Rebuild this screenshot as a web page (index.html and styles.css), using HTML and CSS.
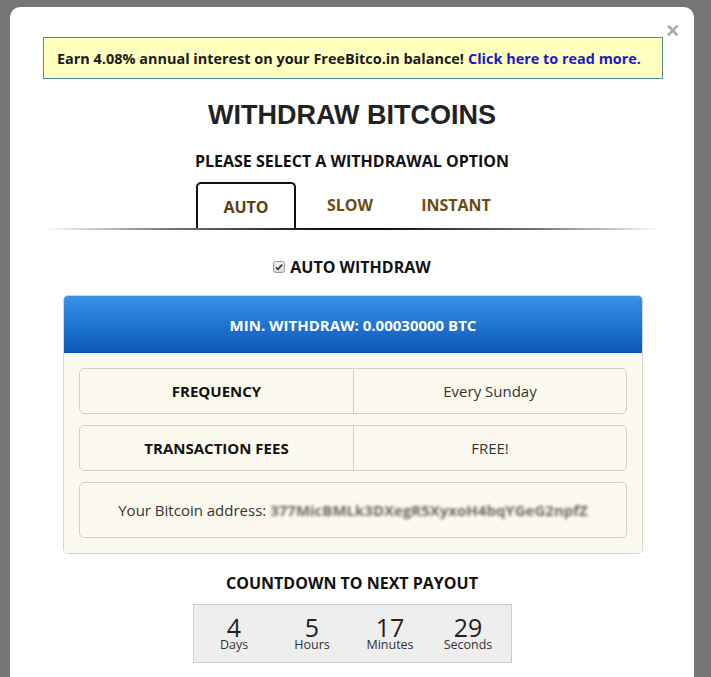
FILE: index.html
```html
<!DOCTYPE html>
<html>
<head>
<meta charset="utf-8">
<link rel="stylesheet" href="styles.css">
</head>
<body>
<div class="modal">
  <span class="close">&#215;</span>
  <div class="banner">Earn 4.08% annual interest on your FreeBitco.in balance! <a href="#">Click here to read more.</a></div>
  <h1 class="title">WITHDRAW BITCOINS</h1>
  <h2 class="subtitle">PLEASE SELECT A WITHDRAWAL OPTION</h2>
  <div class="tabs">
    <div class="tab active">AUTO</div>
    <div class="tab">SLOW</div>
    <div class="tab">INSTANT</div>
  </div>
  <div class="tabline"></div>
  <label class="check"><svg class="box" width="12" height="12" viewBox="0 0 12 12"><defs><linearGradient id="cg" x1="0" y1="0" x2="0" y2="1"><stop offset="0" stop-color="#f4f4f4"/><stop offset="1" stop-color="#d8d8d8"/></linearGradient></defs><rect x="0.5" y="0.5" width="11" height="11" rx="2" fill="url(#cg)" stroke="#9a9a9a"/><path d="M3 6.2 L5 8.3 L9.2 3.6" fill="none" stroke="#333" stroke-width="1.6"/></svg>AUTO WITHDRAW</label>
  <div class="panel">
    <div class="panel-head">MIN. WITHDRAW: 0.00030000 BTC</div>
    <div class="panel-body">
      <div class="row"><div class="cell key">FREQUENCY</div><div class="cell val">Every Sunday</div></div>
      <div class="row"><div class="cell key">TRANSACTION FEES</div><div class="cell val">FREE!</div></div>
      <div class="row addr">Your Bitcoin address:&nbsp;<span class="blur">377MicBMLk3DXegR5XyxoH4bqYGeG2npfZ</span></div>
    </div>
  </div>
  <h3 class="cd-title">COUNTDOWN TO NEXT PAYOUT</h3>
  <div class="countdown">
    <div class="unit"><span class="num">4</span><span class="lbl">Days</span></div>
    <div class="unit"><span class="num">5</span><span class="lbl">Hours</span></div>
    <div class="unit"><span class="num">17</span><span class="lbl">Minutes</span></div>
    <div class="unit"><span class="num">29</span><span class="lbl">Seconds</span></div>
  </div>
</div>
</body>
</html>
```
FILE: styles.css
```css
html, body { margin: 0; padding: 0; }
body {
  background: #767676;
  font-family: "Open Sans", "DejaVu Sans", sans-serif;
  height: 677px;
  overflow: hidden;
}
.modal {
  position: relative;
  margin: 7px 0 0 10px;
  width: 684px;
  height: 700px;
  background: #fff;
  border-radius: 10px;
  padding-top: 30px;
  box-sizing: border-box;
}
.close {
  position: absolute;
  right: 15px;
  top: 13px;
  font-family: "Liberation Sans", Arial, sans-serif;
  font-weight: bold;
  font-size: 22px;
  color: #a8a8a8;
  line-height: 1;
}
.banner {
  width: 620px;
  height: 42px;
  box-sizing: border-box;
  margin: 0 0 0 33px;
  background: #ffffc0;
  border: 1px solid #4f8f8f;
  font-weight: bold;
  font-size: 14.45px;
  color: #1a1a1a;
  display: flex;
  align-items: center;
  padding-left: 13px;
  white-space: nowrap;
}
.banner a { color: #1a1acc; text-decoration: none; margin-left: 4px; }
.title {
  margin: 20px 0 0;
  text-align: center;
  font-family: "Liberation Sans", Arial, sans-serif;
  font-size: 27px;
  font-weight: bold;
  color: #222;
  line-height: 32px;
}
.subtitle {
  margin: 19px 0 0;
  text-align: center;
  font-size: 16px;
  font-weight: bold;
  color: #111;
  line-height: 22px;
}
.tabs {
  display: flex;
  margin: 10px 0 0 186px;
  height: 46px;
}
.tab {
  font-size: 16px;
  font-weight: bold;
  color: #6e4a12;
  padding: 11px 0 0;
  text-align: center;
  line-height: 24px;
}
.tab:nth-child(2) { width: 108px; }
.tab:nth-child(3) { width: 104px; }
.tab.active {
  width: 96px;
  border: 2px solid #111;
  border-bottom: none;
  border-radius: 5px 5px 0 0;
  padding-top: 11px;
  color: #5e3e0c;
}
.tabline {
  margin: 0 0 0 35px;
  width: 618px;
  height: 2px;
  background: linear-gradient(to right, rgba(0,0,0,0), #777 20%, #111 45%, #111 55%, #777 80%, rgba(0,0,0,0));
}
.check {
  display: flex;
  align-items: center;
  justify-content: center;
  margin: 27px 0 0;
  font-size: 16px;
  font-weight: bold;
  color: #111;
  line-height: 20px;
}
.check .box { margin: 0 5px 0 0; }
.panel {
  width: 580px;
  margin: 18px 0 0 53px;
  border: 1px solid #d8d6c8;
  border-radius: 5px;
  overflow: hidden;
  box-sizing: border-box;
}
.panel-head {
  height: 57px;
  background: linear-gradient(#3a90ea, #0a58b8);
  color: #fff;
  font-weight: bold;
  font-size: 15px;
  display: flex;
  align-items: center;
  justify-content: center;
}
.panel-body {
  background: #fcfaee;
  padding: 15px 15px 15px;
  display: flex;
  flex-direction: column;
  gap: 11px;
}
.row {
  display: flex;
  height: 46px;
  border: 1px solid #d2d0c4;
  border-radius: 5px;
  box-sizing: border-box;
  font-size: 15px;
  color: #222;
}
.cell {
  display: flex;
  align-items: center;
  justify-content: center;
}
.key { width: 273px; font-weight: bold; color: #111; border-right: 1px solid #d2d0c4; }
.val { flex: 1; color: #333; }
.row.addr { height: 56px; align-items: center; justify-content: center; color: #333; }
.blur { color: #666; filter: blur(1.4px); font-weight: bold; font-size: 15px; }
.cd-title {
  margin: 18px 0 0;
  text-align: center;
  font-size: 16px;
  font-weight: bold;
  color: #111;
  line-height: 22px;
}
.countdown {
  width: 319px;
  height: 59px;
  box-sizing: border-box;
  margin: 10px 0 0 183px;
  background: #eee;
  border: 1px solid #ccc;
  display: flex;
  padding: 0 0 0 1px;
}
.unit {
  width: 78px;
  display: flex;
  flex-direction: column;
  align-items: center;
  padding-top: 11px;
}
.num { font-size: 25px; line-height: 22px; color: #222; }
.lbl { font-size: 12.5px; line-height: 14px; color: #333; }
```
